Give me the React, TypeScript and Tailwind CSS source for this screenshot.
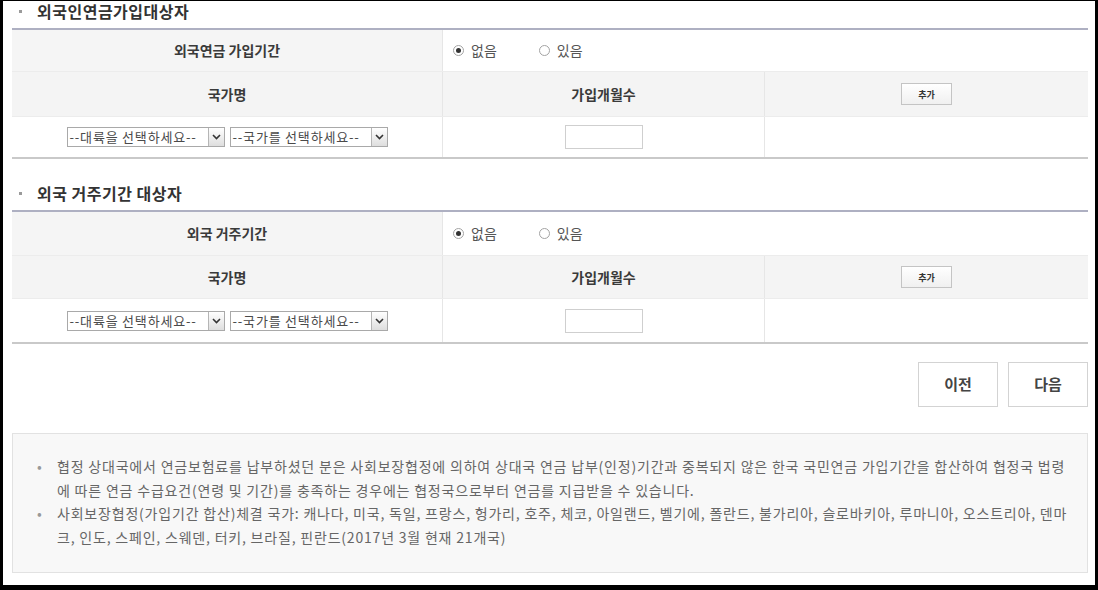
import React from "react";

const font = { fontFamily: '"Noto Sans CJK KR", "Noto Sans", sans-serif' };

function Radio({ checked }: { checked?: boolean }) {
  return (
    <span className="w-[11px] h-[11px] rounded-full border border-[#a3a3a3] bg-white flex items-center justify-center shrink-0">
      {checked && <span className="w-[5px] h-[5px] rounded-full bg-[#333]" />}
    </span>
  );
}

function FakeSelect({ text }: { text: string }) {
  return (
    <div className="w-[158px] h-[20px] border border-[#a9a9a9] bg-white flex items-center">
      <span className="flex-1 pl-[2px] text-[13px] leading-[18px] tracking-[0.8px] text-[#4a4a4a] whitespace-nowrap">
        {text}
      </span>
      <span className="w-[16px] h-[18px] border-l border-[#b5b5b5] bg-gradient-to-b from-white to-[#dedede] flex items-center justify-center shrink-0">
        <svg width="9" height="6" viewBox="0 0 9 6">
          <path d="M1 1 L4.5 4.5 L8 1" fill="none" stroke="#333" strokeWidth="1.6" />
        </svg>
      </span>
    </div>
  );
}

type SectionProps = {
  title: string;
  label: string;
  rows: [number, number, number];
};

function Section({ title, label, rows }: SectionProps) {
  return (
    <div>
      <div className="flex items-start h-[27px]">
        <span className="ml-[7px] mt-[9px] w-[3px] h-[3px] bg-[#9a9a9a]" />
        <h3 className="ml-[15px] text-[16px] tracking-[0.5px] font-bold text-[#333] leading-[20px]">{title}</h3>
      </div>
      <div className="border-t-2 border-[#aeb0c2] border-b-2 border-b-[#c9c9c9]">
        <div className="grid grid-cols-[431px_645px] border-b border-[#ececec]" style={{ height: rows[0] }}>
          <div className="bg-[#f5f5f5] border-r border-[#e6e6e6] flex items-center justify-center text-[14px] font-bold text-[#3a3a3a]">
            {label}
          </div>
          <div className="flex items-center pl-[10px] text-[14px] text-[#555]">
            <Radio checked />
            <span className="ml-[7px]">없음</span>
            <span className="ml-[42px]">
              <Radio />
            </span>
            <span className="ml-[7px]">있음</span>
          </div>
        </div>
        <div className="grid grid-cols-[431px_322px_323px] bg-[#f4f4f4] border-b border-[#ececec]" style={{ height: rows[1] }}>
          <div className="border-r border-[#e6e6e6] flex items-center justify-center text-[14px] font-bold text-[#3a3a3a]">
            국가명
          </div>
          <div className="border-r border-[#e6e6e6] flex items-center justify-center text-[14px] font-bold text-[#3a3a3a]">
            가입개월수
          </div>
          <div className="flex items-center justify-center">
            <button className="w-[51px] h-[22px] border border-[#c4c4c4] bg-gradient-to-b from-white to-[#f0f0f0] text-[9px] font-bold text-[#333] leading-none">
              추가
            </button>
          </div>
        </div>
        <div className="grid grid-cols-[431px_322px_323px] bg-white" style={{ height: rows[2] }}>
          <div className="border-r border-[#e6e6e6] flex items-center justify-center gap-[5px]">
            <FakeSelect text="--대륙을 선택하세요--" />
            <FakeSelect text="--국가를 선택하세요--" />
          </div>
          <div className="border-r border-[#e6e6e6] flex items-center justify-center">
            <input type="text" className="w-[78px] h-[24px] border border-[#cfcfcf] bg-white" />
          </div>
          <div />
        </div>
      </div>
    </div>
  );
}

export default function App() {
  return (
    <div className="w-[1098px] h-[590px] bg-black overflow-hidden pl-[3px] pt-[1px]" style={font}>
      <div className="w-[1092px] h-[584px] bg-white pl-[9px]">
        <div className="w-[1076px]">
          <Section title="외국인연금가입대상자" label="외국연금 가입기간" rows={[42, 45, 40]} />
          <div className="mt-[24px]">
            <Section title="외국 거주기간 대상자" label="외국 거주기간" rows={[44, 43, 43]} />
          </div>

          <div className="flex justify-end gap-[10px] mt-[18px]">
            <button className="w-[80px] h-[45px] border border-[#d3d3d3] bg-white text-[15px] font-bold text-[#444]">
              이전
            </button>
            <button className="w-[80px] h-[45px] border border-[#d3d3d3] bg-white text-[15px] font-bold text-[#444]">
              다음
            </button>
          </div>

          <div className="mt-[26px] h-[140px] border border-[#e2e2e2] bg-[#f8f8f8] pt-[21px] pl-[24px] text-[14px] leading-[23.5px] tracking-[0.8px] text-[#666]">
            <div className="flex">
              <span className="w-[20px] shrink-0 text-[#999]">•</span>
              <p className="whitespace-nowrap">
                협정 상대국에서 연금보험료를 납부하셨던 분은 사회보장협정에 의하여 상대국 연금 납부(인정)기간과 중복되지 않은 한국 국민연금 가입기간을 합산하여 협정국 법령
                <br />
                에 따른 연금 수급요건(연령 및 기간)를 충족하는 경우에는 협정국으로부터 연금를 지급받을 수 있습니다.
              </p>
            </div>
            <div className="flex">
              <span className="w-[20px] shrink-0 text-[#999]">•</span>
              <p className="whitespace-nowrap">
                사회보장협정(가입기간 합산)체결 국가: 캐나다, 미국, 독일, 프랑스, 헝가리, 호주, 체코, 아일랜드, 벨기에, 폴란드, 불가리아, 슬로바키아, 루마니아, 오스트리아, 덴마
                <br />
                크, 인도, 스페인, 스웨덴, 터키, 브라질, 핀란드(2017년 3월 현재 21개국)
              </p>
            </div>
          </div>
        </div>
      </div>
    </div>
  );
}
